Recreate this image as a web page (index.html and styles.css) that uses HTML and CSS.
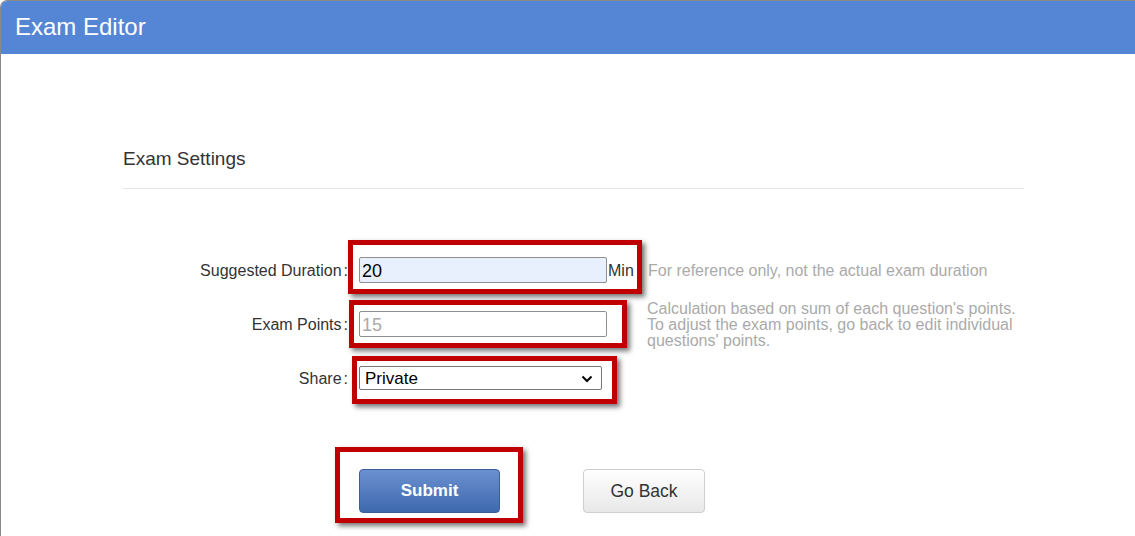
FILE: index.html
```html
<!DOCTYPE html>
<html>
<head>
<meta charset="utf-8">
<link rel="stylesheet" href="styles.css">
</head>
<body>
<div class="frame">
  <header class="topbar">Exam Editor</header>
  <main class="content">
    <section class="settings">
      <h2 class="settings-title">Exam Settings</h2>
      <div class="divider"></div>
    </section>
    <form class="form">
      <div class="row">
        <label class="label">Suggested Duration<span class="colon">:</span></label>
        <div class="field field-duration">
          <input class="input input-filled" type="text" value="20">
          <span class="unit">Min</span>
          <span class="mark mark-1"></span>
        </div>
        <p class="help">For reference only, not the actual exam duration</p>
      </div>
      <div class="row">
        <label class="label">Exam Points<span class="colon">:</span></label>
        <div class="field field-points">
          <input class="input input-disabled" type="text" value="15" disabled>
          <span class="mark mark-2"></span>
        </div>
        <p class="help help-multi">Calculation based on sum of each question's points.<br>To adjust the exam points, go back to edit individual<br>questions' points.</p>
      </div>
      <div class="row">
        <label class="label">Share<span class="colon">:</span></label>
        <div class="field field-share">
          <div class="select">
            <span>Private</span>
            <svg class="chev" width="12" height="8" viewBox="0 0 12 8"><path d="M1.5 1.5 L6 6 L10.5 1.5" fill="none" stroke="#000" stroke-width="2"/></svg>
          </div>
          <span class="mark mark-3"></span>
        </div>
      </div>
      <div class="actions">
        <div class="btn-wrap">
          <button type="button" class="btn btn-primary">Submit</button>
          <span class="mark mark-4"></span>
        </div>
        <button type="button" class="btn btn-default">Go Back</button>
      </div>
    </form>
  </main>
</div>
</body>
</html>
```

FILE: styles.css
```css
* { box-sizing: border-box; }
html, body { margin: 0; padding: 0; background: #fff; }
body {
  font-family: "Liberation Sans", Arial, sans-serif;
  color: #333;
  width: 1135px;
  height: 536px;
  overflow: hidden;
}
.frame {
  border-top: 1px solid #8a8a8a;
  border-left: 1px solid #8a8a8a;
  border-top-left-radius: 7px;
  height: 536px;
  overflow: hidden;
}
.topbar {
  height: 53px;
  background: #5586d5;
  color: #fff;
  font-size: 24px;
  line-height: 52px;
  padding-left: 14px;
}
.content { padding-top: 93px; }
.settings { margin-left: 122px; width: 901px; }
.settings-title {
  margin: 0;
  font-size: 19px;
  font-weight: normal;
  color: #333;
  line-height: 24px;
  height: 24px;
}
.divider {
  margin-top: 17px;
  height: 1px;
  background: #e5e5e5;
}
.form { margin-top: 54px; }
.row {
  display: flex;
  align-items: center;
  height: 54px;
}
.label {
  width: 347px;
  text-align: right;
  font-size: 16px;
  color: #333;
  flex: none;
  padding-top: 2px;
}
.colon { margin-left: 2px; }
.field {
  position: relative;
  display: flex;
  align-items: center;
  margin-left: 11px;
  flex: none;
}
.input {
  width: 248px;
  height: 26px;
  border: 1px solid #8f8f8f;
  border-radius: 2px;
  padding: 2px 2px 0;
  font-family: "Liberation Sans", Arial, sans-serif;
  font-size: 18px;
  color: #000;
  background: #fff;
  outline: none;
}
.input-filled { background: #e8f0fe; }
.input-disabled { color: #aaa; background: #fff; border-color: #8f8f8f; }
.unit { font-size: 16px; color: #333; margin-left: 1px; width: 40px; padding-top: 2px; }
.field-points { width: 288px; }
.help {
  margin: 0;
  font-size: 16px;
  color: #aaa;
  line-height: 18px;
  padding-top: 2px;
}
.help-multi { font-size: 16px; line-height: 16px; }
.field-share { margin-left: 11px; }
.select {
  width: 243px;
  height: 24px;
  border: 1px solid #767676;
  border-radius: 2px;
  display: flex;
  align-items: center;
  justify-content: space-between;
  padding: 1px 8px 0 5px;
  font-size: 17px;
  color: #000;
  background: #fff;
}
.chev { display: block; }
.actions {
  display: flex;
  align-items: center;
  margin-left: 358px;
  margin-top: 64px;
  gap: 83px;
}
.btn-wrap { position: relative; }
.btn {
  height: 44px;
  border-radius: 4px;
  font-family: "Liberation Sans", Arial, sans-serif;
  font-size: 17px;
  cursor: pointer;
  display: block;
}
.btn-primary {
  width: 141px;
  color: #fff;
  font-weight: bold;
  border: 1px solid #3a5e9c;
  background: linear-gradient(#6b90d0, #3e69ae);
}
.btn-default {
  width: 122px;
  color: #333;
  font-size: 17.5px;
  border: 1px solid #cfcfcf;
  background: linear-gradient(#ffffff, #e8e8e8);
}
.mark {
  position: absolute;
  border: 5px solid #c00000;
  box-shadow: 3px 3px 5px rgba(0, 0, 0, 0.55);
  pointer-events: none;
}
.mark-1 { left: -11px; top: -17px; width: 294px; height: 54px; }
.mark-2 { left: -10px; top: -11px; width: 278px; height: 48px; }
.mark-3 { left: -7px; top: -10px; width: 265px; height: 48px; }
.mark-4 { left: -24px; top: -22px; width: 188px; height: 76px; }
```
